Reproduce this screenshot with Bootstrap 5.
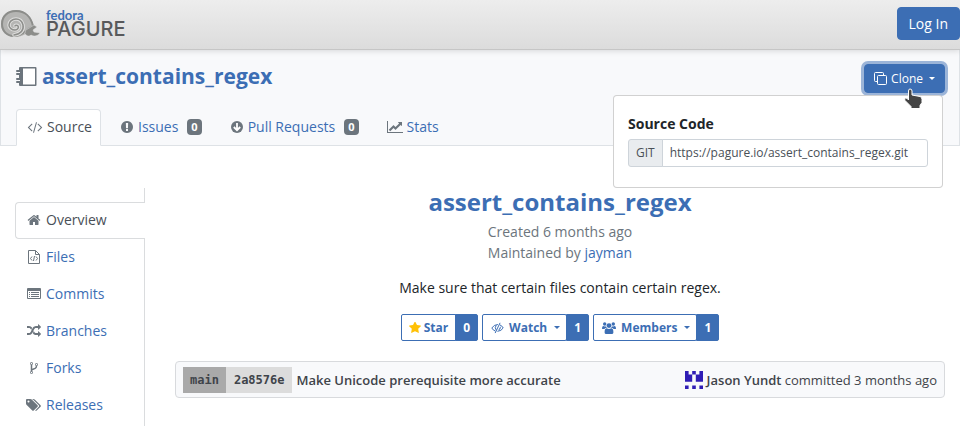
<!DOCTYPE html>
<html lang="en">
<head>
<meta charset="utf-8">
<meta name="viewport" content="width=device-width, initial-scale=1">
<title>assert_contains_regex - Pagure</title>
<link href="https://cdn.jsdelivr.net/npm/bootstrap@5.3.0/dist/css/bootstrap.min.css" rel="stylesheet">
<style>
  :root { --brand: #3c6eb4; --muted: #6c757d; --line: #dee2e6; --panel: #f8f9fb; }
  body { font-family: "Open Sans", "Noto Sans", sans-serif; font-size: 14px; line-height: 21px; color: #212529; overflow-x: hidden; }
  body::-webkit-scrollbar { display: none; }
  a { color: var(--brand); text-decoration: none; }
  svg { fill: currentColor; flex: none; }
  .masthead { background: linear-gradient(#ededed, #dcdcdc); border-bottom: 1px solid #c6c6c6; box-shadow: 0 1px 6px rgba(0,0,0,.14); height: 50px; position: relative; padding-bottom: 2px; }
  .brand-link { gap: 5px; }
  .brand-text { padding-bottom: 1px; }
  .brand-top { font-family: Lato, sans-serif; font-weight: 700; font-size: 13px; line-height: 12px; color: var(--brand); }
  .brand-main { font-family: Inter, sans-serif; font-weight: 500; font-size: 20px; line-height: 17px; color: #58595b; }
  .btn-brand { --bs-btn-bg: var(--brand); --bs-btn-border-color: var(--brand); --bs-btn-color: #fff; --bs-btn-hover-bg: #335d98; --bs-btn-hover-color: #fff; --bs-btn-active-bg: var(--brand); --bs-btn-active-color: #fff; --bs-btn-border-radius: 4px; --bs-btn-font-size: 14px; --bs-btn-line-height: 21px; }
  .btn-login { --bs-btn-padding-x: 11px; --bs-btn-padding-y: 5px; }
  .btn-clone { --bs-btn-font-size: 12px; --bs-btn-line-height: 19px; --bs-btn-padding-x: 9px; --bs-btn-padding-y: 4px; box-shadow: 0 0 0 3px #9bb4d8; }
  .dropdown-toggle::after { margin-left: 6px; border-top-width: 3px; border-left-width: 3px; border-right-width: 3px; }
  .repo-head { background: var(--panel); border: 1px solid var(--line); border-top: 0; padding: 14px 14px 0; }
  .repo-title { font-size: 21px; line-height: 25px; font-weight: 700; }
  .repo-tabs { --bs-nav-tabs-border-width: 1px; border-bottom: 0; margin: 16px 0 -1px; padding-left: 1px; }
  .repo-tabs .nav-link { padding: 6px 8px 8px 10px; height: 37px; margin: 0 8px 0 0; border-radius: 4px 4px 0 0; color: var(--brand); display: flex; align-items: center; gap: 4px; }
  .repo-tabs .nav-link.active { color: #495057; background: #fff; border-color: var(--line) var(--line) #fff; }
  .repo-tabs svg, .side-tabs svg { color: var(--muted); }
  .count { font-size: 11px; line-height: 11px; font-weight: 700; color: #fff; background: var(--muted); padding: 2px 4px 3px; border-radius: 4px; margin-left: 5px; }
  .clone-wrap { position: relative; }
  .clone-menu { position: absolute; right: 2px; top: 31px; width: 330px; padding: 17px 14px 20px; border: 1px solid rgba(0,0,0,.18); border-radius: 4px; background: #fff; z-index: 5; }
  .clone-menu label { margin-bottom: 5px; }
  .clone-menu .input-group > * { font-size: 12px; line-height: 18px; padding: 4px 7px; border-color: #ced4da; color: #495057; border-radius: 3px; min-height: 0; }
  .clone-menu .input-group-text { background: #e9ecef; }
  .pointer { position: absolute; right: 22px; top: 24px; z-index: 6; }
  .side { width: 145px; padding-left: 15px; padding-top: 42px; }
  .side-tabs { position: relative; padding: 14px 0 12px; box-shadow: inset -1px 0 #dadcde; }
  .side-tabs .nav-link { display: flex; align-items: center; gap: 4px; padding: 6px 10px 8px; height: 37px; color: var(--brand); border: 1px solid transparent; border-right-width: 0; }
  .side-tabs .nav-link.active { color: #495057; background: #fff; border-color: #dadcde; border-radius: 4px 0 0 4px; }
  .overview { padding: 41px 15px 0 30px; min-width: 0; }
  .overview-title { font-size: 24px; line-height: 29px; font-weight: 700; color: var(--brand); margin: 0 0 5px; }
  .blurb { margin: 14px 0 16px; }
  .stats { gap: 4px; }
  .btn-stat { --bs-btn-font-size: 12px; --bs-btn-line-height: 19px; --bs-btn-padding-x: 7px; --bs-btn-padding-y: 3px; --bs-btn-font-weight: 700; --bs-btn-color: var(--brand); --bs-btn-border-color: var(--brand); --bs-btn-hover-bg: #e8eff8; --bs-btn-hover-color: var(--brand); --bs-btn-border-radius: 2px; display: flex; align-items: center; gap: 3px; }
  .btn-stat.dropdown-toggle { padding-left: 8px; gap: 5px; }
  .btn-stat.dropdown-toggle::after { margin-left: 2px; margin-right: -1px; }
  .btn-stat.filled { --bs-btn-bg: var(--brand); --bs-btn-color: #fff; }
  .commit-row { background: var(--panel); border: 1px solid #d8dadd; border-radius: 4px; height: 37px; font-size: 13px; line-height: 20px; color: #3f444a; padding: 0 7px; margin-top: 20px; }
  .commit-row a { color: inherit; font-weight: 600; }
  .mono { font-family: "DejaVu Sans Mono", monospace; font-size: 12px; line-height: 26px; font-weight: 700; padding: 0 8px; background: #dcdcdc; }
  .mono.branch { background: #a9a9a9; padding: 0 7px; }
  .who { gap: 4px; }
</style>
<script src="https://cdn.jsdelivr.net/npm/bootstrap@5.3.0/dist/js/bootstrap.bundle.min.js"></script>
</head>
<body>
<header class="masthead d-flex align-items-center justify-content-between">
  <a href="#" class="brand-link d-flex align-items-center" aria-label="Fedora Pagure">
    <svg width="41" height="30" viewBox="0 0 41 30" stroke-linecap="round"><path d="M34 18C32 8 26 1 16 1 7 1 1 7 1 15s6 13 13 13c8 0 13-3 19-10z" fill="#b5b5b3"/><path d="M33 17C31 8 25 2 16 2 8 2 2 7 2 15c0 7 5 12 12 12 9 0 11-6 18-9" fill="none" stroke="#8c8d8a" stroke-width="2"/><path d="M14 26c7-1 10-5 9-10-1-4-4-6-7-6-4 0-7 3-7 6s3 5 6 5 4-3 3-4-3-1-3 0" fill="none" stroke="#dededd" stroke-width="3.500"/><path d="M14 26c7-1 10-5 9-10-1-4-4-6-7-6-4 0-7 3-7 6s3 5 6 5 4-3 3-4-3-1-3 0" fill="none" stroke="#8c8d8a" stroke-width="1.500"/><path d="M26 21l8-5 3 2-4 3 1 2 6 1c-2 3-6 4-9 2-2 2-4 1-6-1z" fill="#8c8d8a" stroke="#e2e2e2" stroke-width=".5"/></svg>
    <span class="brand-text d-flex flex-column"><span class="brand-top">fedora</span><span class="brand-main">PAGURE</span></span>
  </a>
  <a href="#" class="btn btn-brand btn-login">Log In</a>
</header>

<section class="repo-head">
  <div class="d-flex align-items-start justify-content-between">
    <h1 class="repo-title d-flex align-items-center gap-1 m-0">
      <svg width="23" height="21" viewBox="0 0 23 21" color="#6c757d"><path d="M5 1h15.500q1 0 1 1v17q0 1-1 1H5q-1 0-1-1v-2H2q-1 0-1-1t1-1h3v-1H2q-1 0-1-1t1-1h2V9H2Q1 9 1 8t1-1h3V6H2Q1 6 1 5t1-1h2V2q0-1 1-1z"/><path d="M8 2.500h12v16H8z" fill="#fff"/></svg>
      <a href="#">assert_contains_regex</a>
    </h1>
    <div class="clone-wrap">
      <button type="button" class="btn btn-brand btn-clone dropdown-toggle d-flex align-items-center" aria-expanded="true">
        <svg class="me-1" width="13" height="13" viewBox="0 0 13 13" stroke="#fff"><path d="M3.500 9.500h-2a1 1 0 0 1-1-1v-7a1 1 0 0 1 1-1h7a1 1 0 0 1 1 1v2" fill="none"/><rect x="3.500" y="3.500" width="9" height="9" rx="1" fill="none"/></svg>Clone
      </button>
      <div class="clone-menu">
        <label class="fw-bold d-block" for="git-url">Source Code</label>
        <div class="input-group"><span class="input-group-text">GIT</span><input id="git-url" type="text" class="form-control" value="https://pagure.io/assert_contains_regex.git" readonly></div>
      </div>
      <svg class="pointer" width="20" height="22" viewBox="0 0 20 22" aria-hidden="true"><path d="M7 1q2 0 2 2v4l8 1.500q2 .5 2 3v3l-2 3v3H8v-2l-6-6q-1-2 .5-2.500T5.500 12V3q0-2 1.500-2z" fill="#444" stroke="#fff"/></svg>
    </div>
  </div>
  <nav class="nav nav-tabs repo-tabs">
    <a class="nav-link active" href="#"><svg width="16" height="14" viewBox="0 0 2048 1792"><path d="M681 1399l-50 50q-10 10-23 10t-23-10l-466-466q-10-10-10-23t10-23l466-466q10-10 23-10t23 10l50 50q10 10 10 23t-10 23l-393 393 393 393q10 10 10 23t-10 23zm591-1067l-373 1291q-4 13-15.500 19.500t-23.500 2.500l-62-17q-13-4-19.500-15.500t-2.500-24.500l373-1291q4-13 15.500-19.500t23.500-2.500l62 17q13 4 19.500 15.500t2.500 24.500zm657 651l-466 466q-10 10-23 10t-23-10l-50-50q-10-10-10-23t10-23l393-393-393-393q-10-10-10-23t10-23l50-50q10-10 23-10t23 10l466 466q10 10 10 23t-10 23z"/></svg>Source</a>
    <a class="nav-link" href="#"><svg width="14" height="14" viewBox="0 0 1792 1792"><path d="M896 128q209 0 385.500 103t279.500 279.500 103 385.500-103 385.500-279.500 279.500-385.500 103-385.500-103-279.500-279.500-103-385.500 103-385.500 279.500-279.500 385.500-103zm128 1247v-190q0-14-9-23.500t-22-9.500h-192q-13 0-23 10t-10 23v190q0 13 10 23t23 10h192q13 0 22-9.500t9-23.500zm-2-344l18-621q0-12-10-18-10-8-24-8h-220q-14 0-24 8-10 6-10 18l17 621q0 10 10 17.500t24 7.500h185q14 0 23.500-7.500t10.500-17.500z"/></svg>Issues<span class="count">0</span></a>
    <a class="nav-link" href="#"><svg width="14" height="14" viewBox="0 0 14 14"><circle cx="7" cy="7" r="6"/><path d="M7 3v7M3.800 7L7 10.200 10.200 7" fill="none" stroke="#fff" stroke-width="1.800"/></svg>Pull Requests<span class="count">0</span></a>
    <a class="nav-link" href="#"><svg width="16" height="14" viewBox="0 0 2048 1792"><path d="M2048 1536v128h-2048v-1536h128v1408h1920zm-128-1248v435q0 21-19.500 29.500t-35.500-7.500l-121-121-633 633q-10 10-23 10t-23-10l-233-233-416 416-192-192 585-585q10-10 23-10t23 10l233 233 464-464-121-121q-16-16-7.500-35.500t29.500-19.500h435q14 0 23 9t9 23z"/></svg>Stats</a>
  </nav>
</section>

<div class="d-flex">
  <aside class="side flex-shrink-0">
    <nav class="nav flex-column side-tabs">
      <a class="nav-link active" href="#"><svg width="16" height="14" viewBox="-128 0 2048 1792"><path d="M1472 992v480q0 26-19 45t-45 19h-384v-384h-256v384h-384q-26 0-45-19t-19-45v-480q0-1 .5-3t.5-3l575-474 575 474q1 2 1 6zm223-69l-62 74q-8 9-21 11h-3q-13 0-21-7l-692-577-692 577q-12 8-24 7-13-2-21-11l-62-74q-8-10-7-23.500t11-21.500l719-599q32-26 76-26t76 26l244 204v-195q0-14 9-23t23-9h192q14 0 23 9t9 23v408l219 182q10 8 11 21.500t-7 23.500z"/></svg>Overview</a>
      <a class="nav-link" href="#"><svg width="16" height="14" viewBox="0 0 16 14" stroke="#6c757d"><path d="M2.500.5h7l4 4v9h-11zM9.500.5v4h4" fill="none"/><path d="M6 6.500L4.500 8.500 6 10.500M10 6.500l1.500 2-1.500 2M8.500 6l-1 5" fill="none"/></svg>Files</a>
      <a class="nav-link" href="#"><svg width="16" height="14" viewBox="0 0 16 14"><path d="M2 1h12q1 0 1 1v9q0 1-1 1H2q-1 0-1-1V2q0-1 1-1zm0 3v7h12V4z" fill-rule="evenodd"/><path d="M3 5h1v1H3zm2 0h8v1H5zM3 7h1v1H3zm2 0h8v1H5zM3 9h1v1H3zm2 0h8v1H5z"/></svg>Commits</a>
      <a class="nav-link" href="#"><svg width="16" height="14" viewBox="-128 0 2048 1792"><path d="M666 481q-60 92-137 273-22-45-37-72.500t-40.500-63.500-51-56.500-63-35-81.500-14.500h-224q-14 0-23-9t-9-23v-192q0-14 9-23t23-9h224q250 0 410 225zm1126 799q0 14-9 23l-320 320q-9 9-23 9-13 0-22.500-9.500t-9.500-22.500v-192q-32 0-85 .5t-81 1-73-1-71-5-64-10.500-63-18.500-58-28.500-59-40-55-53.500-56-69.500q59-93 136-273 22 45 37 72.500t40.500 63.500 51 56.500 63 35 81.500 14.500h256v-192q0-14 9-23t23-9q12 0 24 10l319 319q9 9 9 23zm0-896q0 14-9 23l-320 320q-9 9-23 9-13 0-22.500-9.500t-9.500-22.500v-192h-256q-48 0-87 15t-69 45-51 61.500-45 77.500q-32 62-78 171-29 66-49.500 111t-54 105-64 100-74 83-90 68.500-106.500 42-128 16.500h-224q-14 0-23-9t-9-23v-192q0-14 9-23t23-9h224q48 0 87-15t69-45 51-61.500 45-77.500q32-62 78-171 29-66 49.500-111t54-105 64-100 74-83 90-68.500 106.500-42 128-16.500h256v-192q0-14 9-23t23-9q12 0 24 10l319 319q9 9 9 23z"/></svg>Branches</a>
      <a class="nav-link" href="#"><svg width="16" height="14" viewBox="-128 0 2048 1792"><path d="M672 1472q0-40-28-68t-68-28-68 28-28 68 28 68 68 28 68-28 28-68zm0-1152q0-40-28-68t-68-28-68 28-28 68 28 68 68 28 68-28 28-68zm640 128q0-40-28-68t-68-28-68 28-28 68 28 68 68 28 68-28 28-68zm96 0q0 52-26 96.500t-70 69.500q-2 287-226 414-67 38-203 81-128 40-169.500 71t-41.500 100v26q44 25 70 69.500t26 96.500q0 80-56 136t-136 56-136-56-56-136q0-52 26-96.500t70-69.500v-820q-44-25-70-69.500t-26-96.500q0-80 56-136t136-56 136 56 56 136q0 52-26 96.500t-70 69.500v497q54-26 154-57 55-17 87.500-29.500t70.500-31 59-39.500 40.500-51 28-69.500 8.500-91.500q-44-25-70-69.500t-26-96.500q0-80 56-136t136-56 136 56 56 136z"/></svg>Forks</a>
      <a class="nav-link" href="#"><svg width="16" height="14" viewBox="0 0 2048 1792"><path d="M448 448q0-53-37.500-90.500t-90.500-37.500-90.500 37.500-37.500 90.500 37.500 90.500 90.500 37.500 90.500-37.500 37.500-90.500zm1067 576q0 53-37 90l-491 492q-39 37-91 37-53 0-90-37l-715-716q-38-37-64.500-101t-26.500-117v-416q0-52 38-90t90-38h416q53 0 117 26.500t102 64.500l715 714q37 39 37 91zm384 0q0 53-37 90l-491 492q-39 37-91 37-36 0-59-14t-53-45l470-470q37-37 37-90 0-52-37-91l-715-714q-38-38-102-64.500t-117-26.500h224q53 0 117 26.500t102 64.500l715 714q37 39 37 91z"/></svg>Releases</a>
    </nav>
  </aside>
  <main class="overview flex-grow-1">
    <div class="text-center">
      <h2 class="overview-title">assert_contains_regex</h2>
      <div class="text-secondary">Created 6 months ago<br>Maintained by <a href="#">jayman</a></div>
      <p class="blurb">Make sure that certain files contain certain regex.</p>
      <div class="stats d-flex justify-content-center">
        <div class="btn-group"><button type="button" class="btn btn-stat"><svg width="12" height="12" viewBox="64 100 1664 1664" color="#ffc107"><path d="M1728 647q0 22-26 48l-363 354 86 500q1 7 1 20 0 21-10.500 35.500t-30.500 14.500q-19 0-40-12l-449-236-449 236q-22 12-40 12-21 0-31.500-14.500t-10.500-35.500q0-6 2-20l86-500-364-354q-25-27-25-48 0-37 56-46l502-73 225-455q19-41 49-41t49 41l225 455 502 73q56 9 56 46z"/></svg>Star</button><button type="button" class="btn btn-stat filled">0</button></div>
        <div class="btn-group"><button type="button" class="btn btn-stat dropdown-toggle"><svg width="13" height="12" viewBox="0 0 13 12"><path d="M6.500 2.500Q2.800 2.700.8 6q1.200 2.300 3.300 3M9.200 3q2 .8 3 3-1.800 3-5.400 3.300M5 3.600Q3.200 5.800 5 7.800M8.900 1.200L4.300 10.700" fill="none" stroke="currentColor" stroke-linecap="round"/><path d="M9.600 4.300q.8 3.200-2.500 4.300z"/></svg>Watch</button><button type="button" class="btn btn-stat filled">1</button></div>
        <div class="btn-group"><button type="button" class="btn btn-stat dropdown-toggle"><svg width="14" height="12" viewBox="0 0 14 12"><circle cx="2.700" cy="2" r="1.700"/><circle cx="11.300" cy="2" r="1.700"/><circle cx="7" cy="3.600" r="2.400"/><path d="M0 6.500Q0 4 1.200 4q1.400.8 2.900.2Q4.200 5.300 5 6H3.200L2.500 7H1Q0 7 0 6.500zM14 6.500Q14 4 12.800 4q-1.400.8-2.900.2Q9.800 5.300 9 6h1.800l.7 1H13q1 0 1-.5zM2.600 10.500Q2.600 6.300 4.700 6.300q2.300 1.600 4.600 0 2.100 0 2.100 4.200 0 1.500-1.600 1.500H4.200q-1.600 0-1.600-1.500z"/></svg>Members</button><button type="button" class="btn btn-stat filled">1</button></div>
      </div>
    </div>
    <div class="commit-row d-flex align-items-center">
      <span class="mono branch">main</span><span class="mono">2a8576e</span><a href="#" class="ms-1">Make Unicode prerequisite more accurate</a>
      <span class="who ms-auto d-flex align-items-center">
        <svg width="18" height="18" viewBox="0 0 50 50" color="#2f1db5"><path d="M0 0h10v10h10V0h10v10h10V0h10v30H30V10H20v20H0zM0 40h10v10H0zM20 40h10v10H20zM40 40h10v10H40z"/></svg>
        <span><a href="#">Jason Yundt</a> committed 3 months ago</span>
      </span>
    </div>
  </main>
</div>
</body>
</html>
